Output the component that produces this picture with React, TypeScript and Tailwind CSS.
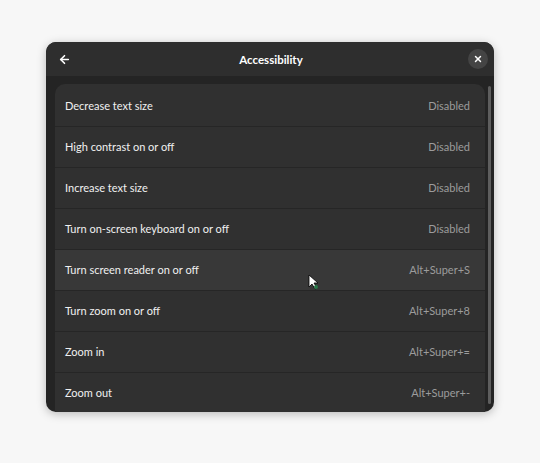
import { ArrowLeft, X } from "lucide-react";

const rows = [
  { label: "Decrease text size", value: "Disabled" },
  { label: "High contrast on or off", value: "Disabled" },
  { label: "Increase text size", value: "Disabled" },
  { label: "Turn on-screen keyboard on or off", value: "Disabled" },
  { label: "Turn screen reader on or off", value: "Alt+Super+S", hover: true },
  { label: "Turn zoom on or off", value: "Alt+Super+8" },
  { label: "Zoom in", value: "Alt+Super+=" },
  { label: "Zoom out", value: "Alt+Super+-" },
];

export default function App() {
  return (
    <main
      className="w-[540px] h-[463px] bg-[#f7f7f7] pt-[42px] pl-[46px]"
      style={{ fontFamily: 'Lato, "Noto Sans", sans-serif' }}
    >
      <div className="w-[448px] h-[370px] rounded-[10px] bg-[#242424] overflow-hidden shadow-[0_2px_10px_rgba(0,0,0,0.25)] flex flex-col">
        {/* Header */}
        <div className="h-[34px] bg-[#2e2e2e] flex items-center justify-between pl-[8px] pr-[6px] shrink-0">
          <div className="w-[20px] h-[20px] flex items-center justify-center text-white">
            <ArrowLeft size={13} strokeWidth={3} />
          </div>
          <h1 className="text-[11.5px] font-bold text-white pt-[1px]">Accessibility</h1>
          <div className="w-[20px] h-[20px] rounded-full bg-[#444444] flex items-center justify-center text-white">
            <X size={10} strokeWidth={3.5} />
          </div>
        </div>

        {/* Content */}
        <div className="relative flex-1 pt-[8px] pl-[9px] pr-[9px]">
          <div className="rounded-t-[10px] bg-[#303030] overflow-hidden">
            {rows.map((row, i) => (
              <div
                key={row.label}
                className={`flex items-center justify-between pl-[10px] pr-[15px] ${
                  i > 0 ? "h-[41px] border-t border-[#262626]" : "h-[42px] pt-[2px]"
                } ${row.hover ? "bg-[#383838]" : ""}`}
              >
                <span className="text-[11px] text-[#f0f0f0]">{row.label}</span>
                <span className="text-[11px] text-[#9c9c9c]">{row.value}</span>
              </div>
            ))}
          </div>
          {/* Scrollbar */}
          <div className="absolute right-[3px] top-[10px] w-[3px] h-[318px] rounded-full bg-[#5e5e5e]" />
          {/* Cursor */}
          <svg className="absolute left-[262px] top-[198px]" width="12" height="16" viewBox="0 0 12 16">
            <path d="M1 1 L1 13 L4 10 L7 15 L9 14 L6 9 L10 9 Z" fill="white" stroke="black" strokeWidth="0.8" />
            <circle cx="8" cy="13" r="2" fill="#2a7a4a" />
          </svg>
        </div>
      </div>
    </main>
  );
}
